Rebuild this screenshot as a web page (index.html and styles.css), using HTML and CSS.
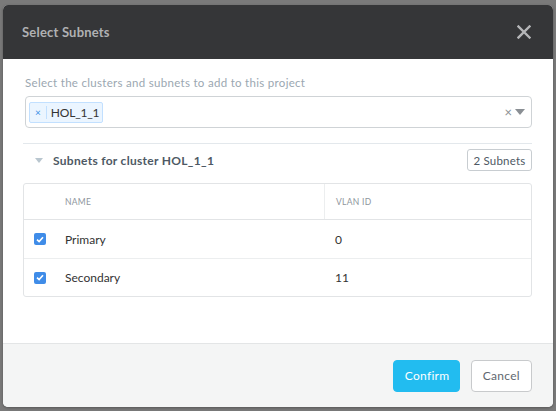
FILE: index.html
```html
<!DOCTYPE html>
<html>
<head>
<meta charset="utf-8">
<link rel="stylesheet" href="styles.css">
</head>
<body>
<div class="backdrop">
  <div class="modal">
    <div class="modal-header">
      <span class="title">Select Subnets</span>
      <svg class="close" width="14" height="14" viewBox="0 0 14 14"><path d="M1.5 1.5L12.5 12.5M12.5 1.5L1.5 12.5" stroke="#b5b6b8" stroke-width="2.4" stroke-linecap="square"/></svg>
    </div>
    <div class="modal-body">
      <div class="label">Select the clusters and subnets to add to this project</div>
      <div class="select">
        <div class="tag"><span class="tag-x">×</span><span class="tag-text">HOL_1_1</span></div>
        <div class="select-controls">
          <span class="clear">×</span>
          <svg class="caret" width="10" height="6" viewBox="0 0 10 6"><path d="M0 0H10L5 6Z" fill="#8a8f94"/></svg>
        </div>
      </div>
      <div class="cluster-head">
        <div class="cluster-title">
          <svg class="tri" width="8" height="5" viewBox="0 0 8 5"><path d="M0 0H8L4 5Z" fill="#b9c6cf"/></svg>
          <span>Subnets for cluster HOL_1_1</span>
        </div>
        <div class="count-btn">2 Subnets</div>
      </div>
      <div class="table">
        <div class="row head">
          <div class="c-check"></div>
          <div class="c-name">NAME</div>
          <div class="c-vlan">VLAN ID</div>
        </div>
        <div class="row">
          <div class="c-check"><span class="cb"><svg width="8" height="7" viewBox="0 0 8 7"><path d="M1 3.6L3.1 5.6L7 1.2" stroke="#fff" stroke-width="1.6" fill="none"/></svg></span></div>
          <div class="c-name">Primary</div>
          <div class="c-vlan">0</div>
        </div>
        <div class="row">
          <div class="c-check"><span class="cb"><svg width="8" height="7" viewBox="0 0 8 7"><path d="M1 3.6L3.1 5.6L7 1.2" stroke="#fff" stroke-width="1.6" fill="none"/></svg></span></div>
          <div class="c-name">Secondary</div>
          <div class="c-vlan">11</div>
        </div>
      </div>
    </div>
    <div class="modal-footer">
      <button class="btn primary">Confirm</button>
      <button class="btn">Cancel</button>
    </div>
  </div>
</div>
</body>
</html>
```
FILE: styles.css
```css
* { box-sizing: border-box; }
html, body { margin: 0; padding: 0; }
body {
  width: 556px;
  height: 411px;
  overflow: hidden;
  background: #7a7a7a;
  font-family: "Lato", "Open Sans", sans-serif;
}
.backdrop {
  padding: 5px 3px 0 3px;
  height: 411px;
}
.modal {
  width: 550px;
  height: 402px;
  background: #fff;
  border-radius: 5px;
  overflow: hidden;
  display: flex;
  flex-direction: column;
  box-shadow: 0 1px 3px rgba(0,0,0,0.3);
}
.modal-header {
  height: 54px;
  flex: none;
  background: #353638;
  display: flex;
  align-items: center;
  justify-content: space-between;
  padding: 0 22px 0 19px;
}
.title {
  color: #b0b1b3;
  font-size: 13px;
  font-weight: 700;
  letter-spacing: 0.2px;
}
.close { display: block; }
.modal-body {
  flex: 1;
  padding: 17px 21px 0 20px;
}
.label {
  color: #9ba7b1;
  font-size: 11.5px;
  letter-spacing: 0.3px;
  padding-left: 2px;
  line-height: 14px;
}
.select {
  margin: 6px 0 0 2px;
  height: 32px;
  border: 1px solid #cfd3d6;
  border-radius: 4px;
  display: flex;
  align-items: center;
  justify-content: space-between;
  padding: 0 6px 0 3px;
}
.tag {
  height: 21px;
  background: #ebf5ff;
  border: 1px solid #c2e0ff;
  border-radius: 2px;
  display: flex;
  align-items: center;
  font-size: 12px;
  color: #333;
}
.tag-x {
  color: #3a8ee6;
  font-size: 10px;
  padding: 0 5px 0 5px;
  border-right: 1px solid #c2e0ff;
  height: 13px;
  line-height: 13px;
}
.tag-text {
  padding: 0 3px 0 4px;
  letter-spacing: -0.2px;
}
.select-controls {
  display: flex;
  align-items: center;
  gap: 3px;
}
.clear {
  color: #8a8f94;
  font-size: 13px;
  line-height: 13px;
}
.caret { display: block; }
.cluster-head {
  margin-top: 15px;
  border-top: 1px solid #e3e8ec;
  padding-top: 5px;
  display: flex;
  align-items: center;
  justify-content: space-between;
}
.cluster-title {
  display: flex;
  align-items: center;
  color: #4e5964;
  font-size: 12px;
  font-weight: 700;
  letter-spacing: 0.3px;
  padding-left: 12px;
}
.tri { margin-right: 10px; display: block; }
.count-btn {
  height: 22px;
  width: 65px;
  border: 1px solid #c8cdd1;
  border-radius: 3px;
  font-size: 11.5px;
  color: #4e5964;
  display: flex;
  align-items: center;
  justify-content: center;
  letter-spacing: 0.2px;
}
.table {
  margin-top: 12px;
  border: 1px solid #e2e4e6;
  border-radius: 3px;
}
.row {
  display: flex;
  align-items: stretch;
  height: 38px;
  border-top: 1px solid #eceeef;
  font-size: 12px;
  color: #333;
}
.row.head {
  height: 36px;
  border-top: none;
  border-bottom: 1px solid #e2e4e6;
  font-size: 8.5px;
  color: #8e969d;
  letter-spacing: 0.3px;
}
.row.head + .row { border-top: none; }
.c-check {
  width: 41px;
  display: flex;
  align-items: center;
  padding-left: 10px;
}
.c-name {
  width: 259px;
  display: flex;
  align-items: center;
}
.c-vlan {
  flex: 1;
  display: flex;
  align-items: center;
  padding-left: 11px;
}
.row.head .c-vlan { border-left: 1px solid #eceeef; }
.cb {
  width: 12px;
  height: 12px;
  background: #3f8ce8;
  border-radius: 2px;
  display: flex;
  align-items: center;
  justify-content: center;
}
.cb svg { display: block; }
.modal-footer {
  height: 64px;
  flex: none;
  background: #f4f5f5;
  border-top: 1px solid #e3e5e6;
  display: flex;
  align-items: center;
  justify-content: flex-end;
  gap: 11px;
  padding: 0 21px 0 0;
}
.btn {
  height: 32px;
  border: 1px solid #c8cacc;
  background: #fff;
  border-radius: 4px;
  font-family: inherit;
  font-size: 12px;
  color: #5f6870;
  padding: 0 11px;
  letter-spacing: 0.3px;
}
.btn.primary {
  background: #22bcf0;
  border-color: #22bcf0;
  color: #fff;
  width: 67px;
}
```
